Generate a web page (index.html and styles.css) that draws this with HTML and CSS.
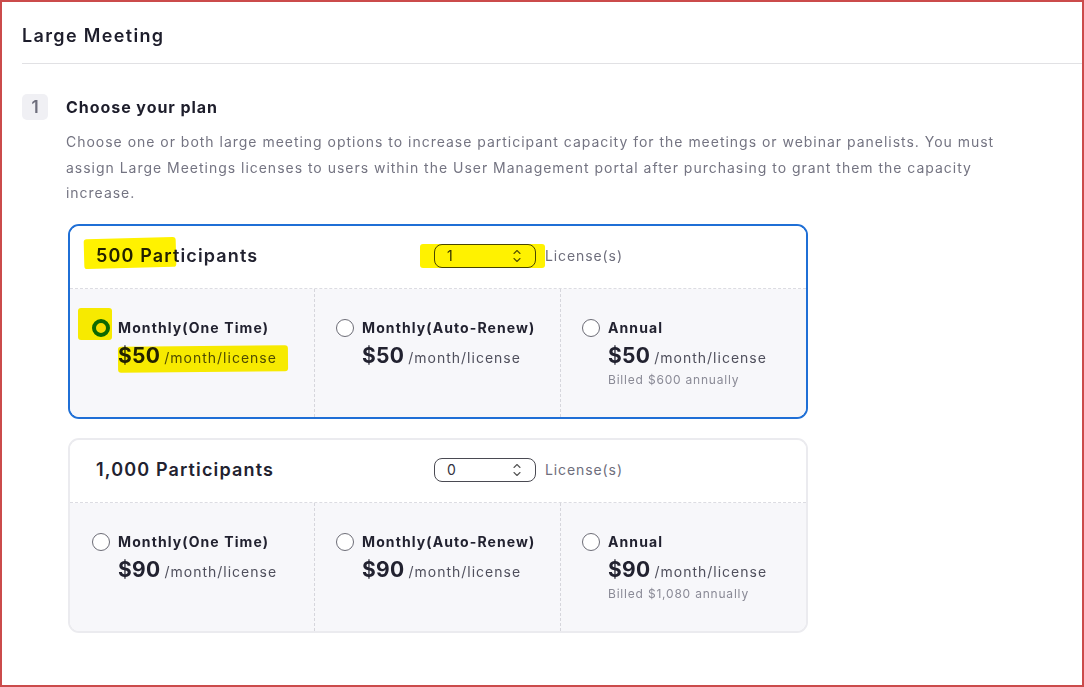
FILE: index.html
```html
<!DOCTYPE html>
<html lang="en">
<head>
<meta charset="utf-8">
<title>Large Meeting</title>
<link rel="stylesheet" href="styles.css">
</head>
<body>
<div class="frame">
  <header class="page-head">
    <h1 class="page-title">Large Meeting</h1>
  </header>
  <section class="step">
    <div class="step-row">
      <span class="step-num">1</span>
      <h2 class="step-title">Choose your plan</h2>
    </div>
    <div class="step-body">
      <p class="desc">Choose one or both large meeting options to increase participant capacity for the meetings or webinar panelists. You must assign Large Meetings licenses to users within the User Management portal after purchasing to grant them the capacity increase.</p>

      <div class="card card-active">
        <div class="card-head">
          <span class="card-title">500 Participants</span>
          <div class="qty">
            <span class="qty-val">1</span>
            <svg class="spin" width="10" height="16" viewBox="0 0 10 16"><path d="M2 5.5 5 2.5 8 5.5M2 10.5 5 13.5 8 10.5" fill="none" stroke="#555" stroke-width="1.1" stroke-linecap="round" stroke-linejoin="round"/></svg>
          </div>
          <span class="qty-label">License(s)</span>
          <span class="hl hl-title"></span>
          <span class="hl hl-qty"></span>
        </div>
        <div class="card-body">
          <div class="opt">
            <span class="radio radio-on"></span>
            <div class="opt-text">
              <div class="opt-name">Monthly(One Time)</div>
              <div class="price"><span class="amt">$50</span><span class="per">/month/license</span></div>
            </div>
            <span class="hl hl-radio"></span>
            <span class="hl hl-price"></span>
          </div>
          <div class="opt">
            <span class="radio"></span>
            <div class="opt-text">
              <div class="opt-name">Monthly(Auto-Renew)</div>
              <div class="price"><span class="amt">$50</span><span class="per">/month/license</span></div>
            </div>
          </div>
          <div class="opt">
            <span class="radio"></span>
            <div class="opt-text">
              <div class="opt-name">Annual</div>
              <div class="price"><span class="amt">$50</span><span class="per">/month/license</span></div>
              <div class="billed">Billed $600 annually</div>
            </div>
          </div>
        </div>
      </div>

      <div class="card">
        <div class="card-head">
          <span class="card-title">1,000 Participants</span>
          <div class="qty">
            <span class="qty-val">0</span>
            <svg class="spin" width="10" height="16" viewBox="0 0 10 16"><path d="M2 5.5 5 2.5 8 5.5M2 10.5 5 13.5 8 10.5" fill="none" stroke="#555" stroke-width="1.1" stroke-linecap="round" stroke-linejoin="round"/></svg>
          </div>
          <span class="qty-label">License(s)</span>
        </div>
        <div class="card-body">
          <div class="opt">
            <span class="radio"></span>
            <div class="opt-text">
              <div class="opt-name">Monthly(One Time)</div>
              <div class="price"><span class="amt">$90</span><span class="per">/month/license</span></div>
            </div>
          </div>
          <div class="opt">
            <span class="radio"></span>
            <div class="opt-text">
              <div class="opt-name">Monthly(Auto-Renew)</div>
              <div class="price"><span class="amt">$90</span><span class="per">/month/license</span></div>
            </div>
          </div>
          <div class="opt">
            <span class="radio"></span>
            <div class="opt-text">
              <div class="opt-name">Annual</div>
              <div class="price"><span class="amt">$90</span><span class="per">/month/license</span></div>
              <div class="billed">Billed $1,080 annually</div>
            </div>
          </div>
        </div>
      </div>
    </div>
  </section>
</div>
</body>
</html>
```

FILE: styles.css
```css
* { box-sizing: border-box; }
html, body { margin: 0; padding: 0; background: #fff; }
body {
  font-family: Inter, "Noto Sans", "Liberation Sans", sans-serif;
  color: #222230;
}
.frame {
  width: 1084px;
  height: 687px;
  border: 2px solid #cb4b4b;
  overflow: hidden;
  background: #fff;
}
.page-head {
  margin-left: 20px;
  height: 62px;
  border-bottom: 1px solid #e1e1e4;
  display: flex;
  align-items: center;
  padding-top: 5px;
}
.page-title {
  margin: 0;
  font-size: 18px;
  font-weight: 600;
  letter-spacing: 1.35px;
  color: #1d1d2b;
}
.step {
  padding: 30px 0 0 20px;
}
.step-row {
  display: flex;
  align-items: center;
  gap: 18px;
  height: 26px;
}
.step-num {
  width: 26px;
  height: 26px;
  border-radius: 5px;
  background: #f0f0f4;
  color: #6e6e7c;
  font-size: 17px;
  font-weight: 600;
  display: flex;
  align-items: center;
  justify-content: center;
}
.step-title {
  margin: 0;
  font-size: 16px;
  font-weight: 700;
  letter-spacing: 0.95px;
  color: #1d1d2b;
}
.step-body {
  padding-left: 44px;
}
.desc {
  margin: 9px 0 0 0;
  width: 945px;
  font-size: 14px;
  line-height: 25.5px;
  letter-spacing: 0.98px;
  color: #747482;
}
.card {
  position: relative;
  margin: 18px 0 0 2px;
  width: 740px;
  border: 2px solid #ebebef;
  border-radius: 11px;
  overflow: hidden;
}
.card + .card { margin-top: 19px; }
.card-active { border-color: #1f6fd6; }
.card-head {
  position: relative;
  height: 63px;
  display: flex;
  align-items: center;
  padding-left: 26px;
  padding-bottom: 2px;
  border-bottom: 1px dashed #dcdce2;
  background: #fff;
}
.card-title {
  width: 338px;
  font-size: 18px;
  font-weight: 600;
  letter-spacing: 1.15px;
  color: #222230;
}
.qty {
  width: 102px;
  height: 24px;
  border: 1px solid #4a4a52;
  border-radius: 8px;
  display: flex;
  align-items: center;
  justify-content: space-between;
  padding: 0 13px 0 12px;
  font-size: 14px;
  color: #333340;
}
.qty-label {
  margin-left: 9px;
  font-size: 14px;
  letter-spacing: 0.9px;
  color: #6e6e7c;
}
.card-body {
  display: grid;
  grid-template-columns: 244px 246px 246px;
  background: #f7f7fa;
  height: 128px;
}
.opt {
  position: relative;
  display: flex;
  gap: 8px;
  padding: 30px 0 0 22px;
}
.opt + .opt { border-left: 1px dashed #d6d6dc; padding-left: 21px; }
.radio {
  flex: none;
  width: 18px;
  height: 18px;
  border: 1px solid #6c6c76;
  border-radius: 50%;
  background: #fff;
}
.radio-on {
  border: 4px solid #0c6e12;
  background: #f7ea00;
}
.opt-text { display: flex; flex-direction: column; }
.opt-name {
  font-size: 14px;
  font-weight: 700;
  line-height: 18px;
  letter-spacing: 1.1px;
  color: #222230;
}
.price {
  display: flex;
  align-items: baseline;
  gap: 4px;
  margin-top: 5px;
  line-height: 28px;
}
.amt {
  font-size: 21px;
  font-weight: 700;
  letter-spacing: 0.3px;
  color: #222230;
}
.per {
  font-size: 14px;
  letter-spacing: 1px;
  color: #4f4f5c;
}
.billed {
  font-size: 12px;
  letter-spacing: 0.8px;
  color: #8a8a96;
  line-height: 16px;
}
.hl {
  position: absolute;
  background: #fff200;
  mix-blend-mode: multiply;
  border-radius: 3px;
}
.hl-title { left: 14px; top: 12px; width: 92px; height: 30px; transform: rotate(-1.5deg); }
.hl-qty { left: 350px; top: 18px; width: 125px; height: 24px; }
.hl-radio { left: 8px; top: 19px; width: 34px; height: 32px; }
.hl-price { left: 48px; top: 57px; width: 170px; height: 26px; transform: rotate(-0.5deg); }
```
